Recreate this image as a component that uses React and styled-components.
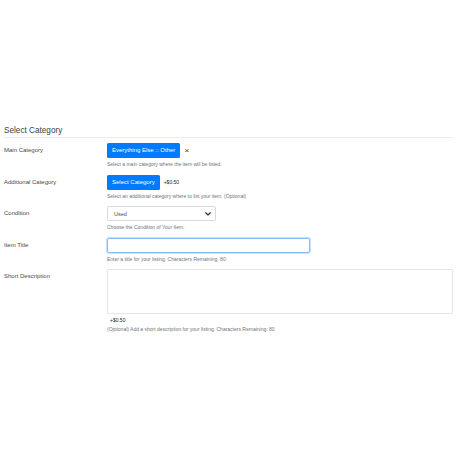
import React from 'react'
import styled, { createGlobalStyle } from 'styled-components'

const GlobalStyle = createGlobalStyle`
  html, body {
    margin: 0;
    padding: 0;
    background: #fff;
  }
  body {
    font-family: "Liberation Sans", Arial, sans-serif;
    color: #212529;
  }
`

const fields = [
  {
    label: 'Main Category',
    help: 'Select a main category where the item will be listed.',
    type: 'category',
    text: 'Everything Else :: Other',
    extra: 'remove'
  },
  {
    label: 'Additional Category',
    help: 'Select an additional category where to list your item. (Optional)',
    type: 'category',
    text: 'Select Category',
    extra: 'price'
  },
  {
    label: 'Condition',
    help: 'Choose the Condition of Your Item.',
    type: 'select',
    text: 'Used'
  },
  {
    label: 'Item Title',
    help: 'Enter a title for your listing. Characters Remaining: 80',
    type: 'input'
  },
  {
    label: 'Short Description',
    help: '(Optional) Add a short description for your listing. Characters Remaining: 80',
    type: 'textarea',
    price: '+$0.50'
  }
]

const Chevron = () => (
  <svg width="6" height="4" viewBox="0 0 12 8">
    <path d="M1.5 1.5 L6 6 L10.5 1.5" fill="none" stroke="#343a40" strokeWidth="2.4" strokeLinecap="round" strokeLinejoin="round" />
  </svg>
)

const Control = ({ field }) => {
  if (field.type === 'category') {
    return (
      <Inline>
        <Button>{field.text}</Button>
        {field.extra === 'remove' && <Remove>×</Remove>}
        {field.extra === 'price' && <Price>+$0.50</Price>}
      </Inline>
    )
  }
  if (field.type === 'select') {
    return (
      <Select>
        <span>{field.text}</span>
        <Chevron />
      </Select>
    )
  }
  if (field.type === 'input') return <TitleInput />
  return (
    <>
      <TextArea />
      <TextPrice>{field.price}</TextPrice>
    </>
  )
}

const App = () => (
  <Page>
    <GlobalStyle />
    <Heading>Select Category</Heading>
    {fields.map((field) => (
      <Row key={field.label}>
        <Label>{field.label}</Label>
        <Field>
          <Control field={field} />
          <Help>{field.help}</Help>
        </Field>
      </Row>
    ))}
  </Page>
)

export default App

const Page = styled.div`
  width: 458px;
  height: 458px;
  box-sizing: border-box;
  padding: 125px 5px 0 4px;
`

const Heading = styled.div`
  font-size: 8.2px;
  line-height: 12px;
  color: #3a3f44;
  padding-bottom: 0;
  border-bottom: 1px solid #ececec;
  margin-bottom: 5px;
`

const Row = styled.div`
  display: grid;
  grid-template-columns: 103px 1fr;
  margin-bottom: 7.6px;
`

const Label = styled.div`
  font-size: 6px;
  line-height: 15px;
  color: #45494d;
`

const Field = styled.div`
  display: flex;
  flex-direction: column;
  align-items: flex-start;
`

const Inline = styled.div`
  display: flex;
  align-items: center;
  height: 15px;
`

const Button = styled.div`
  height: 15px;
  box-sizing: border-box;
  padding: 0 5px;
  background: #007bff;
  color: #fff;
  font-size: 6px;
  line-height: 15px;
  border-radius: 1.5px;
  white-space: nowrap;
`

const Remove = styled.span`
  margin-left: 4px;
  font-size: 8px;
  line-height: 15px;
  color: #343a40;
`

const Price = styled.span`
  margin-left: 4px;
  font-size: 5px;
  color: #212529;
`

const Select = styled.div`
  width: 109px;
  height: 15px;
  box-sizing: border-box;
  border: 1px solid #d6dade;
  border-radius: 2px;
  display: flex;
  align-items: center;
  justify-content: space-between;
  padding: 0 4px 0 6px;
  font-size: 5.5px;
  color: #495057;
`

const TitleInput = styled.div`
  width: 203px;
  height: 15px;
  box-sizing: border-box;
  border: 1px solid #80bdff;
  border-radius: 2px;
  box-shadow: 0 0 0 1px rgba(0, 123, 255, 0.22);
`

const TextArea = styled.div`
  width: 346px;
  height: 45px;
  box-sizing: border-box;
  border: 1px solid #e4e6e8;
  border-radius: 1px;
`

const TextPrice = styled.div`
  font-size: 5px;
  line-height: 6px;
  margin: 3px 0 0 3px;
  color: #212529;
`

const Help = styled.div`
  font-size: 5px;
  line-height: 6px;
  margin-top: 3px;
  color: #6c757d;
  white-space: nowrap;
`
